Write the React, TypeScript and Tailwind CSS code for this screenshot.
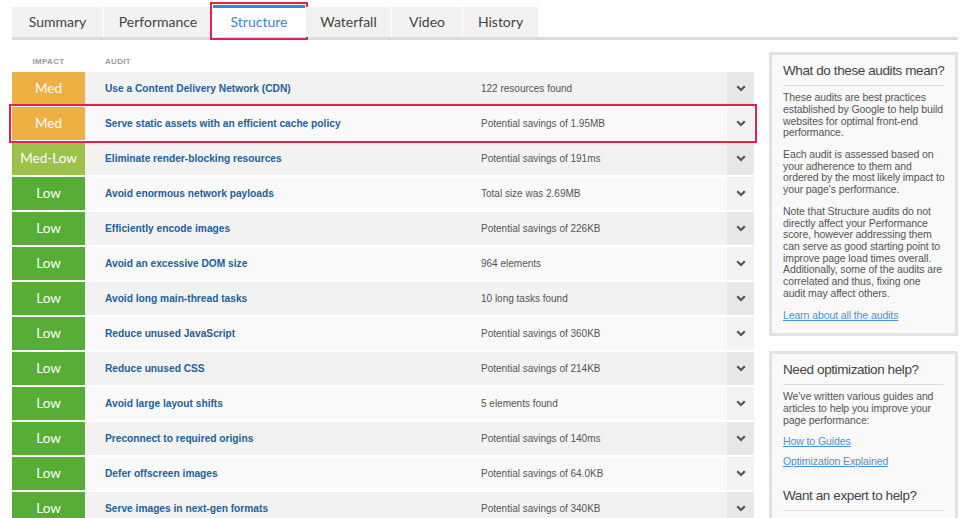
import React from "react";

type Impact = "Med" | "Med-Low" | "Low";

const audits: { impact: Impact; title: string; result: string }[] = [
  { impact: "Med", title: "Use a Content Delivery Network (CDN)", result: "122 resources found" },
  { impact: "Med", title: "Serve static assets with an efficient cache policy", result: "Potential savings of 1.95MB" },
  { impact: "Med-Low", title: "Eliminate render-blocking resources", result: "Potential savings of 191ms" },
  { impact: "Low", title: "Avoid enormous network payloads", result: "Total size was 2.69MB" },
  { impact: "Low", title: "Efficiently encode images", result: "Potential savings of 226KB" },
  { impact: "Low", title: "Avoid an excessive DOM size", result: "964 elements" },
  { impact: "Low", title: "Avoid long main-thread tasks", result: "10 long tasks found" },
  { impact: "Low", title: "Reduce unused JavaScript", result: "Potential savings of 360KB" },
  { impact: "Low", title: "Reduce unused CSS", result: "Potential savings of 214KB" },
  { impact: "Low", title: "Avoid large layout shifts", result: "5 elements found" },
  { impact: "Low", title: "Preconnect to required origins", result: "Potential savings of 140ms" },
  { impact: "Low", title: "Defer offscreen images", result: "Potential savings of 64.0KB" },
  { impact: "Low", title: "Serve images in next-gen formats", result: "Potential savings of 340KB" },
];

const impactColor: Record<Impact, string> = {
  Med: "bg-[#efb043]",
  "Med-Low": "bg-[#9cc24a]",
  Low: "bg-[#58ad36]",
};

const tabs = ["Summary", "Performance", "Structure", "Waterfall", "Video", "History"];
const tabWidths = ["w-[91px]", "w-[108px]", "w-[92px]", "w-[85px]", "w-[70px]", "w-[75px]"];

const Chevron = () => (
  <svg width="10" height="7" viewBox="0 0 10 7">
    <path d="M1.2 1.2 L5 5 L8.8 1.2" fill="none" stroke="#555" strokeWidth="2.2" />
  </svg>
);

export default function App() {
  return (
    <div className="w-[969px] h-[518px] overflow-hidden bg-white font-['Liberation_Sans',Arial,sans-serif]">
      {/* tabs */}
      <div className="ml-3 mr-[11px] pt-[7px] flex gap-px border-b-[3px] border-[#dcdcdc]">
        {tabs.map((t, i) => {
          const active = t === "Structure";
          return (
            <div
              key={t}
              className={`${tabWidths[i]} flex items-center justify-center pb-[2px] font-['Lato',sans-serif] text-[14px] ${
                active
                  ? "bg-white text-[#3a86d6] border-t-[3px] border-[#3a86d6] outline-2 outline-[#e3214c] outline-offset-[1px] -mt-[2px] h-[32px]"
                  : "bg-[#f2f2f2] text-[#444] h-[30px]"
              }`}
            >
              {t}
            </div>
          );
        })}
      </div>

      <div className="flex pl-3 mt-3 gap-[15px]">
        {/* audits table */}
        <div className="w-[742px]">
          <div className="h-5 flex items-center text-[8px] font-bold text-[#999] tracking-[0.3px]">
            <div className="w-[73px] text-center">IMPACT</div>
            <div className="pl-5">AUDIT</div>
          </div>
          {audits.map((a, i) => {
            const dark = i % 2 === 0;
            const highlighted = i === 1;
            return (
              <div
                key={a.title}
                className={`flex h-[33px] mb-[2px] items-stretch ${dark ? "bg-[#f2f2f2]" : "bg-[#f9f9f9]"} ${
                  highlighted ? "outline-2 outline-[#e3214c] outline-offset-[1px]" : ""
                }`}
              >
                <div
                  className={`w-[73px] flex items-center justify-center text-white font-['Lato',sans-serif] text-[13.5px] ${impactColor[a.impact]}`}
                >
                  {a.impact}
                </div>
                <div className="w-[396px] pl-5 flex items-center text-[10.2px] font-bold text-[#22609f]">
                  {a.title}
                </div>
                <div className="w-[246px] flex items-center text-[10px] text-[#555]">{a.result}</div>
                <div className={`w-[27px] flex items-center justify-center ${dark ? "bg-[#e8e8e8]" : "bg-[#f3f3f3]"}`}>
                  <Chevron />
                </div>
              </div>
            );
          })}
        </div>

        {/* sidebar */}
        <div className="w-[189px] flex flex-col gap-[15px]">
          <div className="border-[3px] border-[#e2e2e2] bg-[#f9f9f9] pl-[11px] pr-[9px] pt-[6px] pb-[12px]">
            <div className="text-[13.5px] tracking-[-0.4px] text-[#444] pb-[4px] border-b border-[#dddddd] mr-[3px] whitespace-nowrap">
              What do these audits mean?
            </div>
            <div className="text-[10.5px] tracking-[-0.1px] leading-[11.7px] text-[#555] mt-[6px] flex flex-col gap-[10px]">
              <p>These audits are best practices established by Google to help build websites for optimal front-end performance.</p>
              <p>Each audit is assessed based on your adherence to them and ordered by the most likely impact to your page's performance.</p>
              <p>
                Note that Structure audits do not directly affect your Performance score, however addressing them can serve as good
                starting point to improve page load times overall. Additionally, some of the audits are correlated and thus, fixing one
                <br />
                audit may affect others.
              </p>
              <p className="text-[#4a90e2] underline">Learn about all the audits</p>
            </div>
          </div>
          <div className="border-[3px] border-[#e2e2e2] bg-[#f9f9f9] pl-[11px] pr-[9px] pt-[6px] pb-[12px]">
            <div className="text-[13.5px] tracking-[-0.4px] text-[#444] pb-[4px] border-b border-[#dddddd] mr-[3px] whitespace-nowrap">
              Need optimization help?
            </div>
            <div className="text-[10.5px] tracking-[-0.1px] leading-[11.7px] text-[#555] mt-[6px] flex flex-col gap-[9px]">
              <p>We've written various guides and articles to help you improve your page performance:</p>
              <p className="text-[#4a90e2] underline">How to Guides</p>
              <p className="text-[#4a90e2] underline">Optimization Explained</p>
            </div>
            <div className="text-[13.5px] tracking-[-0.4px] text-[#444] pb-[4px] border-b border-[#dddddd] mr-[3px] mt-[18px] whitespace-nowrap">
              Want an expert to help?
            </div>
          </div>
        </div>
      </div>
    </div>
  );
}
